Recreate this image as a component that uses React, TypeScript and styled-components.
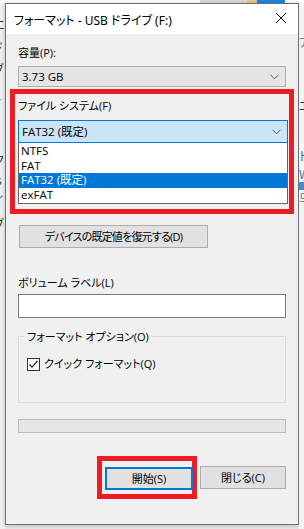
import React from "react";
import styled, { createGlobalStyle } from "styled-components";

const GlobalStyle = createGlobalStyle`
  html, body { margin: 0; padding: 0; }
  body {
    width: 304px;
    height: 529px;
    overflow: hidden;
    background: #ececec;
    font-family: "Open Sans", "Noto Sans CJK JP", sans-serif;
    font-feature-settings: "palt";
    font-size: 11px;
    color: #000;
  }
  * { box-sizing: border-box; }
`;

const Desktop = styled.div`
  display: flex;
  flex-direction: column;
  width: 304px;
  height: 529px;
`;

const TopStrip = styled.div`
  height: 3px;
  flex: none;
  background: linear-gradient(
    to right,
    #ffffff 0px,
    #ffffff 200px,
    #dadada 200px,
    #dadada 247px,
    #e9c77f 247px,
    #e9c77f 257px,
    #1e86dc 257px,
    #1e86dc 285px,
    #ffffff 285px
  );
`;

const Stage = styled.div`
  display: grid;
  grid-template-columns: 5px 294px 5px;
  flex: 1;
`;

const Peek = styled.div<{ $side: "left" | "right" }>`
  display: flex;
  flex-direction: column;
  overflow: hidden;
  background: ${(p) => (p.$side === "left" ? "#f1f1f1" : "#f3f3f3")};
  font-family: "Noto Sans CJK JP", sans-serif;
  font-size: 12px;
  line-height: 14px;
`;

const PeekChar = styled.span<{ $top: number; $color?: string; $shift: number }>`
  display: block;
  white-space: nowrap;
  margin-top: ${(p) => p.$top}px;
  margin-left: ${(p) => p.$shift}px;
  height: 14px;
  overflow: hidden;
  color: ${(p) => p.$color || "#333"};
`;

const PeekBar = styled.div<{ $top: number }>`
  height: 8px;
  flex: none;
  margin-top: ${(p) => p.$top}px;
  background: #3a8fd8;
`;

const Dialog = styled.div`
  display: flex;
  flex-direction: column;
  height: 522px;
  border: 1px solid #6f6f6f;
  box-shadow: 0 1px 5px rgba(0, 0, 0, 0.22);
  background: #f0f0f0;
`;

const TitleBar = styled.div`
  display: flex;
  align-items: center;
  justify-content: space-between;
  height: 30px;
  flex: none;
  padding: 0 8px 0 8px;
  background: #ffffff;
`;

const TitleText = styled.span`
  font-family: "Noto Sans", "Noto Sans CJK JP", sans-serif;
  font-size: 12px;
  line-height: 14px;
  color: #000;
  margin-top: 3px;
`;

const CloseGlyph = styled.svg`
  width: 12px;
  height: 12px;
  margin-right: 3px;
  margin-top: -2px;
`;

const Body = styled.div`
  display: flex;
  flex-direction: column;
  flex: 1;
  padding: 0 12px;
`;

const Label = styled.div<{ $top: number }>`
  line-height: 14px;
  height: 14px;
  margin-top: ${(p) => p.$top}px;
  white-space: nowrap;
`;

const Combo = styled.div<{ $focused?: boolean; $top: number; $h: number }>`
  display: flex;
  align-items: center;
  justify-content: space-between;
  height: ${(p) => p.$h}px;
  margin-top: ${(p) => p.$top}px;
  padding: 0 6px 0 3px;
  border: 1px solid ${(p) => (p.$focused ? "#0078d7" : "#adadad")};
  background: ${(p) => (p.$focused ? "#cce4f7" : "#e5e5e5")};
  line-height: 14px;
  font-size: 11.5px;
`;

const Chevron = styled.svg`
  width: 9px;
  height: 6px;
`;

const RedFrame = styled.div`
  display: flex;
  flex-direction: column;
  margin: 2px -8px 0 -8px;
  padding: 0 1px 5px 3px;
  border: 5px solid #ed1c24;
`;

const DropList = styled.div`
  display: flex;
  flex-direction: column;
  border: 1px solid #646464;
  border-top: none;
  background: #ffffff;
  padding: 1px 0;
  font-size: 11.5px;
`;

const ListItem = styled.div<{ $selected?: boolean }>`
  height: 14.5px;
  line-height: 14.5px;
  padding-left: 2px;
  overflow: hidden;
  background: ${(p) => (p.$selected ? "#0078d7" : "transparent")};
  color: ${(p) => (p.$selected ? "#ffffff" : "#000")};
`;

const PushButton = styled.div<{ $w: number; $top?: number; $left?: number; $default?: boolean; $tight?: boolean }>`
  display: flex;
  align-items: center;
  justify-content: center;
  width: ${(p) => p.$w}px;
  height: 23px;
  flex: none;
  margin-top: ${(p) => p.$top ?? 0}px;
  margin-left: ${(p) => p.$left ?? 0}px;
  background: #e1e1e1;
  border: ${(p) => (p.$default ? "2px solid #0078d7" : "1px solid #adadad")};
  line-height: 14px;
  letter-spacing: ${(p) => (p.$tight ? "-0.8px" : "0")};
  white-space: nowrap;
`;

const TextInput = styled.div`
  height: 24px;
  margin-top: 4px;
  border: 1px solid #7a7a7a;
  background: #ffffff;
`;

const GroupBox = styled.div`
  display: flex;
  flex-direction: column;
  height: 67px;
  margin-top: 18px;
  border: 1px solid #dcdcdc;
  padding: 0 8px;
`;

const Legend = styled.div`
  align-self: flex-start;
  margin: -7px 0 0 -2px;
  padding: 0 2px;
  line-height: 14px;
  background: #f0f0f0;
  white-space: nowrap;
`;

const CheckRow = styled.div`
  display: flex;
  align-items: center;
  gap: 4px;
  margin-top: 13px;
  line-height: 14px;
`;

const CheckBox = styled.div`
  display: flex;
  align-items: center;
  justify-content: center;
  width: 13px;
  height: 13px;
  border: 1px solid #333333;
  background: #ffffff;
`;

const Progress = styled.div`
  height: 14px;
  margin-top: 16px;
  border: 1px solid #bcbcbc;
  background: #e6e6e6;
`;

const ButtonRow = styled.div`
  display: flex;
  justify-content: flex-end;
  align-items: center;
  gap: 3px;
  margin-top: 23px;
`;

const RedButtonFrame = styled.div`
  display: flex;
  width: 100px;
  height: 43px;
  padding: 6px 0 0 3px;
  border: 5px solid #ed1c24;
`;

const ChevronIcon = () => (
  <Chevron viewBox="0 0 9 6">
    <polyline points="0.5,0.8 4.5,4.8 8.5,0.8" fill="none" stroke="#5a5a5a" strokeWidth="1" />
  </Chevron>
);

export default function App() {
  return (
    <>
      <GlobalStyle />
      <Desktop>
        <TopStrip />
        <Stage>
          <Peek $side="left">
            <PeekChar $top={15} $shift={-7}>エ</PeekChar>
            <PeekChar $top={8} $shift={-7}>ド</PeekChar>
            <PeekChar $top={8} $shift={-7}>ブ</PeekChar>
            <PeekChar $top={16} $shift={-7} $color="#6cc9e6">ト</PeekChar>
            <PeekChar $top={47} $shift={-7}>ク</PeekChar>
            <PeekChar $top={6} $shift={-4}>s</PeekChar>
            <PeekChar $top={6} $shift={-7} $color="#3b82c8">イ</PeekChar>
            <PeekChar $top={10} $shift={-7}>ブ</PeekChar>
          </Peek>
          <Dialog>
            <TitleBar>
              <TitleText>フォーマット - USB ドライブ (F:)</TitleText>
              <CloseGlyph viewBox="0 0 12 12">
                <line x1="1" y1="1" x2="11" y2="11" stroke="#111" strokeWidth="1" />
                <line x1="11" y1="1" x2="1" y2="11" stroke="#111" strokeWidth="1" />
              </CloseGlyph>
            </TitleBar>
            <Body>
              <Label $top={12}>容量(P):</Label>
              <Combo $top={6} $h={21}>
                <span>3.73 GB</span>
                <ChevronIcon />
              </Combo>
              <RedFrame>
                <Label $top={5}>ファイル システム(F)</Label>
                <Combo $focused $top={7} $h={23}>
                  <span>FAT32 (既定)</span>
                  <ChevronIcon />
                </Combo>
                <DropList>
                  <ListItem>NTFS</ListItem>
                  <ListItem>FAT</ListItem>
                  <ListItem $selected>FAT32 (既定)</ListItem>
                  <ListItem>exFAT</ListItem>
                </DropList>
              </RedFrame>
              <PushButton $w={189} $top={11} $left={1} $tight>
                デバイスの既定値を復元する(D)
              </PushButton>
              <Label $top={28}>ボリューム ラベル(L)</Label>
              <TextInput />
              <GroupBox>
                <Legend>フォーマット オプション(O)</Legend>
                <CheckRow>
                  <CheckBox>
                    <svg width="11" height="11" viewBox="0 0 11 11">
                      <polyline points="1.5,5.5 4,8.2 9.5,2" fill="none" stroke="#222" strokeWidth="1.2" />
                    </svg>
                  </CheckBox>
                  <span>クイック フォーマット(Q)</span>
                </CheckRow>
              </GroupBox>
              <Progress />
              <ButtonRow>
                <RedButtonFrame>
                  <PushButton $w={88} $default>
                    開始(S)
                  </PushButton>
                </RedButtonFrame>
                <PushButton $w={86}>閉じる(C)</PushButton>
              </ButtonRow>
            </Body>
          </Dialog>
          <Peek $side="right">
            <PeekChar $top={32} $shift={0} $color="#6a7fa0">ア</PeekChar>
            <PeekChar $top={50} $shift={0}>エ</PeekChar>
            <PeekChar $top={36} $shift={0} $color="#3b6fb5">ト</PeekChar>
            <PeekChar $top={4} $shift={0} $color="#3b6fb5">W</PeekChar>
            <PeekBar $top={1} />
            <PeekChar $top={1} $shift={0} $color="#777">모</PeekChar>
          </Peek>
        </Stage>
      </Desktop>
    </>
  );
}
